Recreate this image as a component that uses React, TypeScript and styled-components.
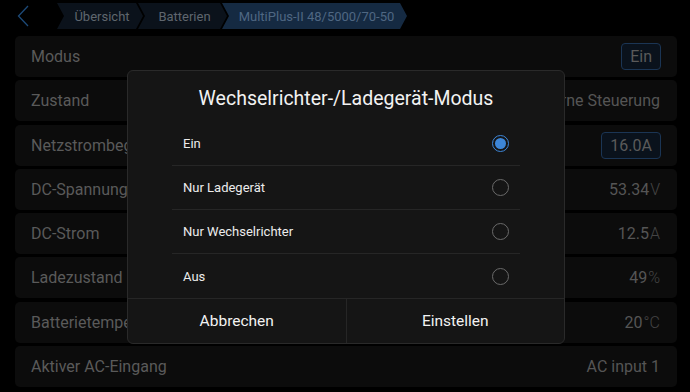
import React from "react";
import styled, { createGlobalStyle } from "styled-components";

const Global = createGlobalStyle`
  html, body { margin: 0; padding: 0; background: #000; }
  body { font-family: Roboto, "Noto Sans", "Liberation Sans", sans-serif; }
  * { box-sizing: border-box; }
`;

const Page = styled.div`
  position: relative;
  width: 690px;
  height: 392px;
  background: #000;
  overflow: hidden;
  display: flex;
  flex-direction: column;
`;

const Header = styled.div`
  height: 36px;
  display: flex;
  align-items: flex-start;
  padding: 3px 0 0 17px;
`;

const Back = styled.div`
  width: 16px;
  height: 26px;
  display: flex;
  align-items: center;
  margin-right: 24px;
`;

const Crumbs = styled.div`
  display: flex;
  height: 26px;
`;

const Crumb = styled.div<{ $active?: boolean; $w: number }>`
  width: ${(p) => p.$w}px;
  height: 26px;
  margin-left: -5px;
  display: flex;
  align-items: center;
  justify-content: center;
  padding-left: 4px;
  font-size: 13px;
  color: ${(p) => (p.$active ? "#4f6782" : "#5f666e")};
  background: ${(p) => (p.$active ? "#152a42" : "#0b121b")};
  clip-path: polygon(0 0, calc(100% - 7px) 0, 100% 50%, calc(100% - 7px) 100%, 0 100%, 7px 50%);
  &:first-child { margin-left: 0; }
`;

const List = styled.div`
  display: flex;
  flex-direction: column;
  gap: 3.3px;
  padding: 0 13px 0 15px;
`;

const Row = styled.div`
  height: 41px;
  border-radius: 5px;
  background: #0c0c0c;
  display: flex;
  align-items: center;
  justify-content: space-between;
  padding: 0 17px 0 16px;
`;

const Label = styled.span`
  font-size: 16px;
  color: #5a5a5a;
`;

const Value = styled.span`
  font-size: 16px;
  color: #555;
`;

const Unit = styled.span`
  color: #444;
  font-weight: 300;
  margin-left: 1px;
`;

const ValueButton = styled.span`
  font-size: 16px;
  color: #5a5a5a;
  border: 1.5px solid #1b3554;
  background: #0a121c;
  border-radius: 4px;
  height: 27px;
  padding: 0 8px;
  display: flex;
  align-items: center;
  margin-right: -1px;
`;

const Dialog = styled.div`
  position: absolute;
  left: 127px;
  top: 70px;
  width: 438px;
  height: 274px;
  background: #151515;
  border: 1px solid #2a2a2a;
  border-radius: 6px;
  display: flex;
  flex-direction: column;
  overflow: hidden;
`;

const Title = styled.div`
  height: 51px;
  display: flex;
  align-items: center;
  justify-content: center;
  padding-top: 4px;
  font-size: 19.5px;
  color: #f2f2f2;
`;

const Options = styled.div`
  display: flex;
  flex-direction: column;
  padding: 0 44px;
`;

const Option = styled.div<{ $last?: boolean }>`
  height: 44px;
  display: flex;
  align-items: center;
  justify-content: space-between;
  padding: 0 11px;
  border-bottom: ${(p) => (p.$last ? "none" : "1px solid #262626")};
  font-size: 13px;
  color: #ececec;
`;

const Radio = styled.span<{ $on?: boolean }>`
  width: 17px;
  height: 17px;
  border-radius: 50%;
  border: 1.5px solid ${(p) => (p.$on ? "#3d86d8" : "#6a6a6a")};
  display: flex;
  align-items: center;
  justify-content: center;
  &::after {
    content: "";
    width: 11px;
    height: 11px;
    border-radius: 50%;
    background: ${(p) => (p.$on ? "#3d86d8" : "transparent")};
  }
`;

const Buttons = styled.div`
  flex: 1;
  display: flex;
  border-top: 1px solid #262626;
`;

const Btn = styled.div`
  flex: 1;
  display: flex;
  align-items: center;
  justify-content: center;
  font-size: 15.5px;
  color: #f2f2f2;
  & + & { border-left: 1px solid #262626; }
`;

export default function App() {
  const opts = ["Ein", "Nur Ladegerät", "Nur Wechselrichter", "Aus"];
  return (
    <>
      <Global />
      <Page>
        <Header>
          <Back>
            <svg width="12" height="22" viewBox="0 0 12 22">
              <path d="M11 1 L1.5 11 L11 21" fill="none" stroke="#1d4a78" strokeWidth="1.3" />
            </svg>
          </Back>
          <Crumbs>
            <Crumb $w={86}>Übersicht</Crumb>
            <Crumb $w={89}>Batterien</Crumb>
            <Crumb $w={185} $active>MultiPlus-II 48/5000/70-50</Crumb>
          </Crumbs>
        </Header>
        <List>
          <Row>
            <Label>Modus</Label>
            <ValueButton>Ein</ValueButton>
          </Row>
          <Row>
            <Label>Zustand</Label>
            <Value>Externe Steuerung</Value>
          </Row>
          <Row>
            <Label>Netzstrombegrenzung</Label>
            <ValueButton>16.0A</ValueButton>
          </Row>
          <Row>
            <Label>DC-Spannung</Label>
            <Value>
              53.34<Unit>V</Unit>
            </Value>
          </Row>
          <Row>
            <Label>DC-Strom</Label>
            <Value>
              12.5<Unit>A</Unit>
            </Value>
          </Row>
          <Row>
            <Label>Ladezustand</Label>
            <Value>
              49<Unit>%</Unit>
            </Value>
          </Row>
          <Row>
            <Label>Batterietemperatur</Label>
            <Value>
              20<Unit>°C</Unit>
            </Value>
          </Row>
          <Row>
            <Label>Aktiver AC-Eingang</Label>
            <Value>AC input 1</Value>
          </Row>
        </List>
        <Dialog>
          <Title>Wechselrichter-/Ladegerät-Modus</Title>
          <Options>
            {opts.map((o, i) => (
              <Option key={o} $last={i === opts.length - 1}>
                {o}
                <Radio $on={i === 0} />
              </Option>
            ))}
          </Options>
          <Buttons>
            <Btn>Abbrechen</Btn>
            <Btn>Einstellen</Btn>
          </Buttons>
        </Dialog>
      </Page>
    </>
  );
}
